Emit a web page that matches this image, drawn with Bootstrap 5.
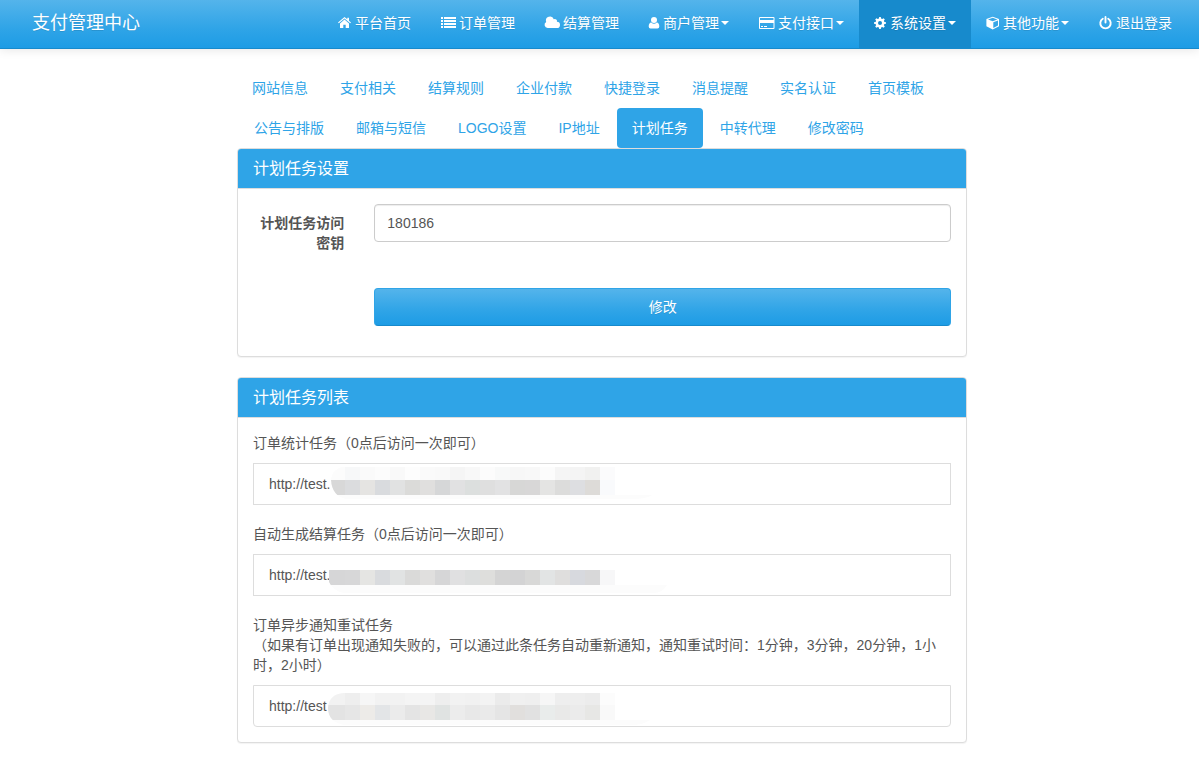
<!DOCTYPE html>
<html lang="zh-CN">
<head>
<meta charset="utf-8">
<meta name="viewport" content="width=device-width, initial-scale=1">
<title>计划任务设置</title>
<link href="https://cdn.jsdelivr.net/npm/bootstrap@5.3.0/dist/css/bootstrap.min.css" rel="stylesheet">
<style>
:root{--brand:#2fa4e7;--brand-dark:#178acc;--line:#ddd}
body{font-family:"Liberation Sans","Noto Sans CJK SC",sans-serif;font-size:14px;line-height:20px;color:#555;background:#fff;padding-left:5px}
a{text-decoration:none}
.topbar{margin-left:-5px;padding:0 0 0 5px;background:linear-gradient(#54b4eb,#2fa4e7 60%,#1d9ce5);border-bottom:1px solid var(--brand-dark);box-shadow:0 1px 10px rgba(0,0,0,.1);text-shadow:0 1px 0 rgba(0,0,0,.1)}
.topbar .container{max-width:1170px;padding:0}
.topbar .navbar-brand{font-size:18px;line-height:20px;padding:13px 15px 15px;margin:0;color:#fff}
.topbar .navbar-nav .nav-link{display:flex;align-items:center;color:#fff;padding:13px 15px 15px;white-space:nowrap}
.topbar .navbar-nav .nav-link.active{background:var(--brand-dark);color:#fff}
.topbar svg{height:14px;fill:currentColor;margin-right:4px;flex:none;overflow:visible}
.caret{border:4px solid transparent;border-top-color:currentColor;border-bottom:0;margin-left:2px}
.page-main{max-width:730px;padding-top:19px}
.nav-pills .nav-item+.nav-item{margin-left:2px}
.nav-pills .nav-link{padding:10px 15px;border-radius:4px;color:var(--brand)}
.nav-pills .nav-link.active{background:var(--brand);color:#fff}
.panel{border:1px solid var(--line);border-radius:4px;box-shadow:0 1px 1px rgba(0,0,0,.05);margin-bottom:20px}
.panel .card-header{background:var(--brand);color:#fff;padding:10px 15px 9px;border-bottom:1px solid var(--line);border-radius:3px 3px 0 0}
.panel .card-header h3{font-size:16px;line-height:20px;font-weight:400;margin:0}
.panel .card-body{padding:15px}
.form-row{--bs-gutter-x:30px}
.form-row label{font-weight:700;padding-top:9px}
.form-actions{margin-top:20px;padding:15px 0}
.panel .form-control{height:38px;font-size:14px;line-height:20px;color:#555;padding:8px 12px;border:1px solid #ccc;border-radius:4px;box-shadow:inset 0 1px 1px rgba(0,0,0,.075)}
.btn-save{height:38px;padding:0 12px;font-size:14px;color:#fff;border:1px solid var(--brand);border-bottom-color:var(--brand-dark);border-radius:4px;background:linear-gradient(#54b4eb,#2fa4e7 60%,#1d9ce5);text-shadow:0 1px 0 rgba(0,0,0,.1)}
.btn-save:hover{color:#fff;background:var(--brand-dark)}
.task+.task{margin-top:19px}
.task p{margin:0 0 10px}
.task-url{border:1px solid var(--line);padding:10px 15px;overflow:hidden}
.task:last-child .task-url{border-radius:0 0 4px 4px}
.task-url svg{position:absolute;left:0;top:0}
</style>
</head>
<body>
<nav class="navbar navbar-expand topbar">
  <div class="container">
    <a class="navbar-brand" href="#">支付管理中心</a>
    <ul class="navbar-nav ms-auto">
      <li class="nav-item"><a class="nav-link" href="#"><svg width="13" viewBox="0 0 13 14" aria-hidden="true"><path d="M6.5 3.6 11 7.4V12H7.7V8.7H5.3V12H2V7.4zM6.5 1 9.3 3.3V1.800H11v2.900l2 1.700-.8.9L6.5 2.600.8 7.300 0 6.400z"/></svg>平台首页</a></li>
      <li class="nav-item"><a class="nav-link" href="#"><svg width="14" viewBox="0 0 14 14" aria-hidden="true"><path d="M0 1h2v2h-2zm3 0h12v2h-12zm-3 3h2v2h-2zm3 0h12v2h-12zm-3 3h2v2h-2zm3 0h12v2h-12zm-3 3h2v2h-2zm3 0h12v2h-12z"/></svg>订单管理</a></li>
      <li class="nav-item"><a class="nav-link" href="#"><svg width="14" viewBox="0 0 14 14" aria-hidden="true"><path d="M2.700 12A3.200 3.200 0 0 1 1.200 6 4 4 0 0 1 8.800 3.300a2.100 2.100 0 0 1 3.100 2.500A3.100 3.100 0 0 1 11.900 12z"/></svg>结算管理</a></li>
      <li class="nav-item"><a class="nav-link" href="#"><svg width="10" viewBox="0 0 10 14" aria-hidden="true"><circle cx="5" cy="4" r="3"/><path d="M2.300 6.500Q5 9 7.700 6.500 10.300 6.800 10.300 10.500 10.200 12.600 8.500 12.600h-7Q-.2 12.600-.3 10.500-.3 6.800 2.300 6.500z"/></svg>商户管理<span class="caret"></span></a></li>
      <li class="nav-item"><a class="nav-link" href="#"><svg width="15" viewBox="0 0 15 14" aria-hidden="true"><path fill-rule="evenodd" d="M1 1h13.500q1 0 1 1v10q0 1-1 1H1q-1 0-1-1V2q0-1 1-1zm0 1v2h13.500V2zM1 7v5h13.500V7zm1 3h2v1H2zm3 0h3v1H5z"/></svg>支付接口<span class="caret"></span></a></li>
      <li class="nav-item"><a class="nav-link active" aria-current="page" href="#"><svg width="12" viewBox="0 0 12 14" aria-hidden="true"><path fill-rule="evenodd" d="m5.200 1h1.600l.3 1.600 1.100.5 1.400-.9 1.200 1.200-.9 1.400.5 1.100 1.600.3v1.600l-1.600.3-.5 1.100.9 1.400-1.200 1.200-1.400-.9-1.100.5L6.800 13H5.200l-.3-1.600-1.100-.5-1.400.9-1.200-1.200.9-1.400-.5-1.100L0 7.800V6.200l1.600-.3.5-1.100-.9-1.400 1.200-1.200 1.400.9 1.100-.5zM6 5a2 2 0 1 0 0 4 2 2 0 0 0 0-4z"/></svg>系统设置<span class="caret"></span></a></li>
      <li class="nav-item"><a class="nav-link" href="#"><svg width="13" viewBox="0 0 13 14" aria-hidden="true"><path fill-rule="evenodd" d="M6.700.7 13 3v7.200l-6.300 3.400L.4 10.200V3zM6.700 1.800 2 3.500l4.700 1.700 4.700-1.700zM7.300 6.300v5.800L12 9.500V4.600z"/></svg>其他功能<span class="caret"></span></a></li>
      <li class="nav-item"><a class="nav-link" href="#"><svg width="13" viewBox="0 0 13 14" aria-hidden="true"><path d="M3.800 2.700A5.200 5.200 0 1 0 9.200 2.700M6.500 1v5.500" fill="none" stroke="currentColor" stroke-width="1.900" stroke-linecap="round"/></svg>退出登录</a></li>
    </ul>
  </div>
</nav>

<main class="page-main mx-auto">
  <ul class="nav nav-pills">
    <li class="nav-item"><a class="nav-link" href="#">网站信息</a></li>
    <li class="nav-item"><a class="nav-link" href="#">支付相关</a></li>
    <li class="nav-item"><a class="nav-link" href="#">结算规则</a></li>
    <li class="nav-item"><a class="nav-link" href="#">企业付款</a></li>
    <li class="nav-item"><a class="nav-link" href="#">快捷登录</a></li>
    <li class="nav-item"><a class="nav-link" href="#">消息提醒</a></li>
    <li class="nav-item"><a class="nav-link" href="#">实名认证</a></li>
    <li class="nav-item"><a class="nav-link" href="#">首页模板</a></li>
    <li class="nav-item"><a class="nav-link" href="#">公告与排版</a></li>
    <li class="nav-item"><a class="nav-link" href="#">邮箱与短信</a></li>
    <li class="nav-item"><a class="nav-link" href="#">LOGO设置</a></li>
    <li class="nav-item"><a class="nav-link" href="#">IP地址</a></li>
    <li class="nav-item"><a class="nav-link active" aria-current="page" href="#">计划任务</a></li>
    <li class="nav-item"><a class="nav-link" href="#">中转代理</a></li>
    <li class="nav-item"><a class="nav-link" href="#">修改密码</a></li>
  </ul>

  <section class="card panel">
    <div class="card-header"><h3>计划任务设置</h3></div>
    <form class="card-body">
      <div class="row form-row">
        <label class="col-2 text-end" for="cronkey">计划任务访问密钥</label>
        <div class="col-10"><input type="text" class="form-control" id="cronkey" value="180186"></div>
      </div>
      <div class="row form-row form-actions">
        <div class="col-10 offset-2"><button type="button" class="btn btn-save w-100 d-block">修改</button></div>
      </div>
    </form>
  </section>

  <section class="card panel">
    <div class="card-header"><h3>计划任务列表</h3></div>
    <div class="card-body">
      <div class="task">
        <p>订单统计任务（0点后访问一次即可）</p>
        <div class="task-url position-relative">http://test.<svg width="420" height="40" data-mask="0" aria-hidden="true"></svg></div>
      </div>
      <div class="task">
        <p>自动生成结算任务（0点后访问一次即可）</p>
        <div class="task-url position-relative">http://test.<svg width="420" height="40" data-mask="1" aria-hidden="true"></svg></div>
      </div>
      <div class="task">
        <p>订单异步通知重试任务<br>（如果有订单出现通知失败的，可以通过此条任务自动重新通知，通知重试时间：1分钟，3分钟，20分钟，1小时，2小时）</p>
        <div class="task-url position-relative">http://test<svg width="420" height="40" data-mask="2" aria-hidden="true"></svg></div>
      </div>
    </div>
  </section>
</main>
<script src="https://cdn.jsdelivr.net/npm/bootstrap@5.3.0/dist/js/bootstrap.bundle.min.js"></script>
<script>
// Mosaic that hides the private part of each address: rows of 15px tiles inside a rounded brush stroke
const masks = [
  {clip:'M82 3H361V31H398Q392 35 380 35H92Q78 32 77 16 78 6 88 3z', rows:[
    {y:3,h:13,c:'fcfcfc f7f8f9 fafafa fcfcfc f9f9f9 fdfdfd fafafa f9f9f9 f5f5f5 f8f8f8 fcfcfc f8f9f9 f7f7f7 f8f8f8 fcfcfc f5f5f5 f4f4f4 f1f1f0 fbfbfc'},
    {y:16,h:15,c:'d8d8d8 dbdcde e5e4e2 d9dbde e1e2e2 dbdbd9 e0dfde d6d7d8 e1e1e2 dcdfde dfdfdf e2e2e3 d7d7d6 d8d7d7 e4e4e3 dcdcdb dddee1 dddbd8 f9fafc'}]},
  {clip:'M75 15H361V30H413Q408 38 400 38H90Q79 36 75 27z', rows:[
    {y:15,h:15,c:'d6d6d7 d7d7d8 e5e5e3 d9dbde e1e3e3 dadad9 e0dfde d6d6d7 e0e0e1 dcdede dededc d4d4d4 d3d3d4 d8d8d7 e2e4e4 dfdedd d7d9de d8d8d9 f7f7f8'}]},
  {clip:'M90 7H361V34H396Q389 39 378 39H90Q74 36 74 22 75 8 90 7z', rows:[
    {y:7,h:12,c:'f2f2f2 eeeeee f6f6f6 f2f2f2 f2f2f2 f4f4f4 f4f4f4 eeeeee f2f2f2 f1f1f1 f3f3f3 ebebeb f0f0f0 efefef f6f6f6 eeeeee eeeeee ececec fcfcfc'},
    {y:19,h:15,c:'e3e3e3 e6e6e6 edebe8 e3e5e7 ebebeb e4e4e4 e8e7e5 e0e3e2 ececec e8e8e8 eaeaea e5e5e5 e1dfdd e1e1e1 e9eceb e9e9e8 ebebeb e7e7e5 f9f9f9'}]}
];
document.querySelectorAll('[data-mask]').forEach(svg => {
  const i = +svg.dataset.mask, m = masks[i];
  let s = `<clipPath id="stroke${i}"><path d="${m.clip}"/></clipPath><g clip-path="url(#stroke${i})" shape-rendering="crispEdges"><path fill="#fcfcfc" d="M70 3H420V40H70z"/>`;
  for (const r of m.rows) r.c.split(' ').forEach((c, n) => {
    s += `<rect x="${n ? 76 + 15 * n : 70}" y="${r.y}" width="${n ? 15 : 21}" height="${r.h}" fill="#${c}"/>`;
  });
  svg.innerHTML = s + '</g>';
});
</script>
</body>
</html>
